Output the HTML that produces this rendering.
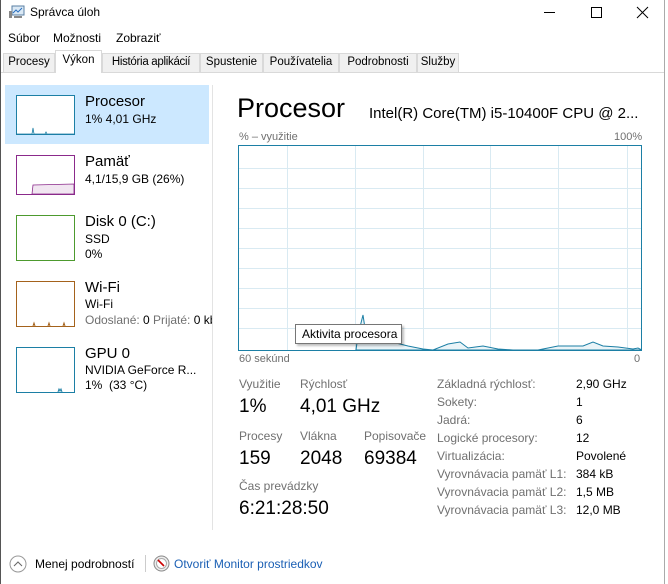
<!DOCTYPE html>
<html><head><meta charset="utf-8"><style>
*{margin:0;padding:0;box-sizing:border-box}
body{width:668px;height:584px;background:#fff;font-family:"Liberation Sans",sans-serif;color:#000;position:relative;overflow:hidden}
.a{position:absolute;white-space:nowrap}
.g{color:#707070}
.tab{position:absolute;top:53px;height:19px;font-size:11.5px;padding:2px 0 0;text-align:center;white-space:nowrap;overflow:hidden;border:1px solid #d9d9d9;border-bottom:none;background:#f0f0f0}
</style></head><body>
<div class="a" style="left:0;top:0;width:1px;height:584px;background:#555"></div>
<div class="a" style="left:664px;top:0;width:1px;height:584px;background:#aaa"></div>
<svg class="a" style="left:9px;top:5px" width="16" height="14"><rect x="3" y="1" width="12" height="9" fill="#dbe9f5" stroke="#5a7fa3"/><polyline points="4,8 7,5 9,7 13,3" fill="none" stroke="#2a70c0"/><rect x="0" y="6" width="3" height="7" fill="#888"/><rect x="5" y="11" width="8" height="2" fill="#888"/></svg>
<div class="a" style="left:30px;top:5px;font-size:12px">Správca úloh</div>
<div class="a" style="left:544px;top:12px;width:11px;height:1px;background:#000"></div>
<div class="a" style="left:591px;top:7px;width:11px;height:11px;border:1px solid #000"></div>
<svg class="a" style="left:636px;top:6px" width="13" height="13"><path d="M1 1L12 12M12 1L1 12" stroke="#000"/></svg>
<div class="a" style="left:8px;top:31px;font-size:12px">Súbor</div>
<div class="a" style="left:53px;top:31px;font-size:12px">Možnosti</div>
<div class="a" style="left:116px;top:31px;font-size:12px">Zobraziť</div>
<div class="a" style="left:1px;top:47px;width:663px;height:25px;background:#fff"></div>
<div class="a" style="left:1px;top:72px;width:663px;height:1px;background:#d9d9d9"></div>
<div class="tab" style="left:3px;width:52px">Procesy</div>
<div class="tab" style="left:55px;top:50px;height:23px;width:47px;background:#fff;padding-top:3px">Výkon</div>
<div class="tab" style="left:102px;width:98px;letter-spacing:-0.3px">História aplikácií</div>
<div class="tab" style="left:200px;width:63px">Spustenie</div>
<div class="tab" style="left:263px;width:76px">Používatelia</div>
<div class="tab" style="left:339px;width:78px">Podrobnosti</div>
<div class="tab" style="left:417px;width:42px">Služby</div>
<div class="a" style="left:5px;top:85px;width:204px;height:59px;background:#cce8ff"></div>
<div class="a" style="left:212px;top:85px;width:1px;height:445px;background:#e3e3e3"></div>
<svg class="a" style="left:0;top:0" width="215" height="400">
<rect x="16.5" y="95.5" width="58" height="39" fill="#fff" stroke="#1c7fa5"/>
<polyline points="17,134 32,134 33,128 34,134 45,134 46,132 47,134 74,134" fill="#e8f3f8" stroke="#1c7fa5" stroke-width=".8"/>
<rect x="16.5" y="155.5" width="58" height="39" fill="#fff" stroke="#8b2a8b"/>
<polygon points="32,194 33,185 74,184 74,194" fill="#f1e6f1" stroke="#8b2a8b" stroke-width=".8"/>
<rect x="16.5" y="215.5" width="58" height="45" fill="#fff" stroke="#4d9a2e"/>
<rect x="16.5" y="281.5" width="58" height="45" fill="#fff" stroke="#a4621c"/>
<path d="M33 326l1-3 1 3M48 326l1-3 1 3M63 326l1-3 1 3" fill="none" stroke="#a4621c"/>
<rect x="16.5" y="347.5" width="58" height="45" fill="#fff" stroke="#1c7fa5"/>
<path d="M58 392l1-3 1 2 1-2 1 3" fill="none" stroke="#1c7fa5"/>
</svg>
<div class="a" style="left:85px;top:93px;font-size:15px">Procesor</div>
<div class="a" style="left:85px;top:112px;font-size:12px">1% 4,01 GHz</div>
<div class="a" style="left:85px;top:153px;font-size:15px">Pamäť</div>
<div class="a" style="left:85px;top:172px;font-size:12px">4,1/15,9 GB (26%)</div>
<div class="a" style="left:85px;top:213px;font-size:15px">Disk 0 (C:)</div>
<div class="a" style="left:85px;top:232px;font-size:12px">SSD</div>
<div class="a" style="left:85px;top:247px;font-size:12px">0%</div>
<div class="a" style="left:85px;top:279px;font-size:15px">Wi-Fi</div>
<div class="a" style="left:85px;top:297px;font-size:12px">Wi-Fi</div>
<div class="a" style="left:85px;top:313px;font-size:12px;width:127px;overflow:hidden"><span class="g">Odoslané:</span> 0 <span class="g">Prijaté:</span> 0 kb</div>
<div class="a" style="left:85px;top:345px;font-size:15px">GPU 0</div>
<div class="a" style="left:85px;top:363px;font-size:12px">NVIDIA GeForce R...</div>
<div class="a" style="left:85px;top:378px;font-size:12px">1%&nbsp; (33 °C)</div>
<div class="a" style="left:237px;top:93px;font-size:27px">Procesor</div>
<div class="a" style="left:369px;top:105px;font-size:15px">Intel(R) Core(TM) i5-10400F CPU @ 2...</div>
<div class="a g" style="left:239px;top:131px;font-size:11px">% – využitie</div>
<div class="a g" style="left:614px;top:131px;font-size:11px">100%</div>
<svg class="a" style="left:238px;top:145px" width="404" height="206">
<g stroke="#d9eaf2" stroke-width="1">
<path d="M0 23.5H404M0 43.5H404M0 63.5H404M0 83.5H404M0 103.5H404M0 123.5H404M0 143.5H404M0 163.5H404M0 183.5H404"/>
<path d="M49.5 0V206M117.5 0V206M185.5 0V206M252.5 0V206M320.5 0V206M389.5 0V206"/>
</g>
<polygon points="118,205 120,190 125,170 128,190 140,196 158,198 170,201 185,204 195,205 210,199 222,197 230,203 245,201 260,204 275,205 300,205 320,201 345,201 355,197 365,201 380,202 395,204 400,203 404,205" fill="#eaf4f8" stroke="#1c7fa5" stroke-width="1"/>
<rect x=".5" y=".5" width="403" height="205" fill="none" stroke="#1c7fa5"/>
</svg>
<div class="a" style="left:295px;top:324px;width:107px;height:20px;background:#fff;border:1px solid #767676;box-shadow:2px 2px 2px rgba(0,0,0,.25);font-size:12px;padding:2px 0 0 6px">Aktivita procesora</div>
<div class="a g" style="left:239px;top:353px;font-size:11px">60 sekúnd</div>
<div class="a g" style="left:634px;top:353px;font-size:11px">0</div>
<div class="a g" style="left:239px;top:377px;font-size:12px">Využitie</div>
<div class="a g" style="left:300px;top:377px;font-size:12px">Rýchlosť</div>
<div class="a" style="left:239px;top:396px;font-size:19px">1%</div>
<div class="a" style="left:300px;top:396px;font-size:19px">4,01 GHz</div>
<div class="a g" style="left:239px;top:429px;font-size:12px">Procesy</div>
<div class="a g" style="left:300px;top:429px;font-size:12px">Vlákna</div>
<div class="a g" style="left:364px;top:429px;font-size:12px">Popisovače</div>
<div class="a" style="left:239px;top:448px;font-size:19px">159</div>
<div class="a" style="left:300px;top:448px;font-size:19px">2048</div>
<div class="a" style="left:364px;top:448px;font-size:19px">69384</div>
<div class="a g" style="left:239px;top:479px;font-size:12px">Čas prevádzky</div>
<div class="a" style="left:239px;top:498px;font-size:19px">6:21:28:50</div>
<div class="a g" style="left:437px;top:375px;font-size:12px;line-height:18px">Základná rýchlosť:<br>Sokety:<br>Jadrá:<br>Logické procesory:<br>Virtualizácia:<br>Vyrovnávacia pamäť L1:<br>Vyrovnávacia pamäť L2:<br>Vyrovnávacia pamäť L3:</div>
<div class="a" style="left:576px;top:375px;font-size:12px;line-height:18px">2,90 GHz<br>1<br>6<br>12<br>Povolené<br>384 kB<br>1,5 MB<br>12,0 MB</div>
<svg class="a" style="left:9px;top:555px" width="18" height="18"><circle cx="9" cy="9" r="8" fill="none" stroke="#999"/><path d="M5 11l4-4 4 4" fill="none" stroke="#666"/></svg>
<div class="a" style="left:35px;top:557px;font-size:12px">Menej podrobností</div>
<div class="a" style="left:145px;top:555px;width:1px;height:17px;background:#ccc"></div>
<svg class="a" style="left:153px;top:555px" width="17" height="17"><circle cx="8.5" cy="8.5" r="7.5" fill="#eee" stroke="#888"/><circle cx="8.5" cy="8.5" r="5" fill="#fff" stroke="#aaa"/><path d="M5 5l6 6" stroke="#c00" stroke-width="1.6"/></svg>
<div class="a" style="left:174px;top:557px;font-size:12px;color:#1a5fb4">Otvoriť Monitor prostriedkov</div>
</body></html>
